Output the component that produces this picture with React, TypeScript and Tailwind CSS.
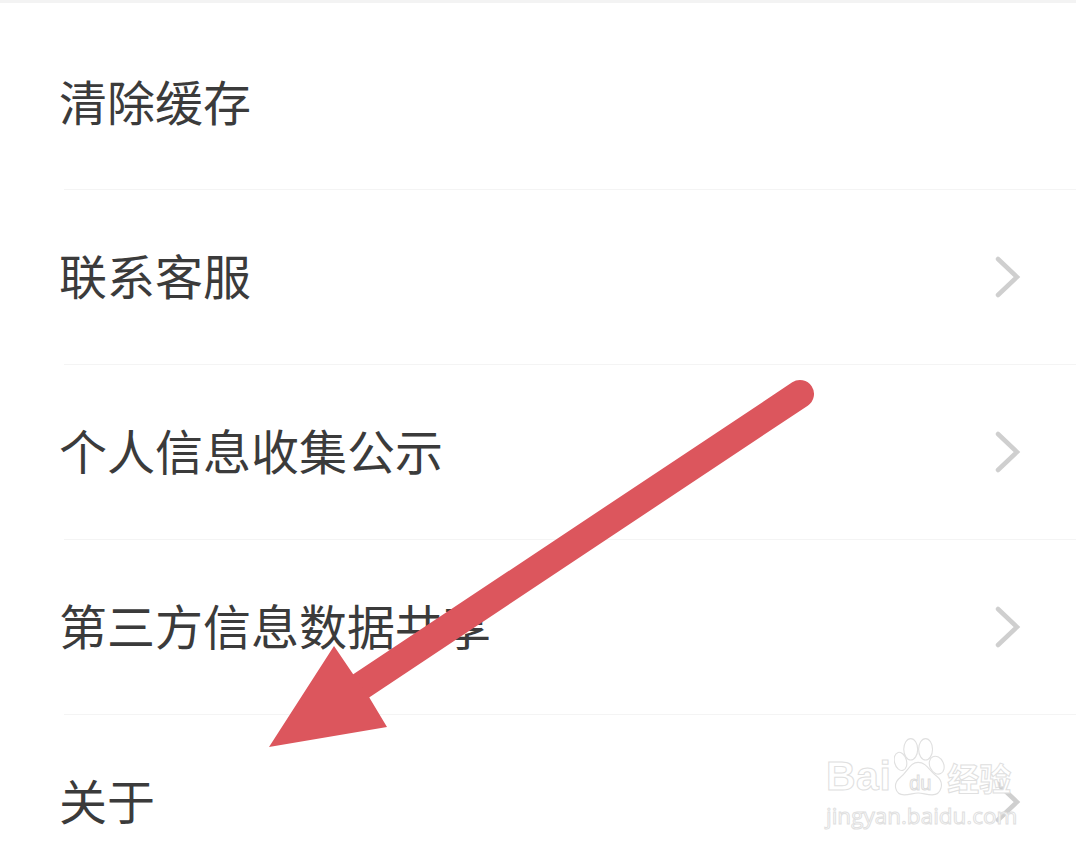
const FONT = "font-['Noto_Sans_CJK_SC',sans-serif]";

function Row({ label, chevron = true, last = false, first = false }: { label: string; chevron?: boolean; last?: boolean; first?: boolean }) {
  return (
    <div className={`relative flex items-center justify-between pl-[59px] pr-[55px] ${first ? "h-[187px] pt-[7px]" : "h-[175px]"}`}>
      <span className={`text-[48px] leading-none text-[#3b3b3b] whitespace-nowrap ${first ? "" : "mb-[8px]"}`}>{label}</span>
      {chevron && (
        <svg width="26" height="42" viewBox="0 0 26 42" fill="none" className="text-[#cfcfcf] mb-[1px]">
          <path d="M3 3 L22 21 L3 39" stroke="currentColor" strokeWidth="4.5" strokeLinecap="round" strokeLinejoin="miter" />
        </svg>
      )}
      {!last && <div className="absolute bottom-0 left-[64px] right-0 h-px bg-[#f4f4f4]" />}
    </div>
  );
}

function Arrow() {
  return (
    <svg className="absolute inset-0 pointer-events-none" width="1076" height="852" viewBox="0 0 1076 852" fill="#dc565d">
      <path d="M800 394 L361 686" stroke="#dc565d" strokeWidth="28" strokeLinecap="round" />
      <polygon points="269,747 334,646 353,674 369,697 387,727" />
    </svg>
  );
}

function Watermark() {
  const outline = "text-white [-webkit-text-stroke:1px_#e0e0e0]";
  return (
    <div className="absolute left-[826px] top-[735px] flex w-[196px] flex-col">
      <div className="flex items-end">
        <span className={`text-[41px] leading-[46px] tracking-[0.5px] font-['Liberation_Sans',sans-serif] font-bold ${outline}`}>Bai</span>
        <div className="relative ml-[3px] flex h-[64px] w-[52px] items-end justify-center">
          <svg className="absolute inset-0" width="52" height="64" viewBox="0 0 56 64" fill="#fff" stroke="#e0e0e0" strokeWidth="1.2">
            <ellipse cx="18" cy="13" rx="7.5" ry="11.5" />
            <ellipse cx="34" cy="13" rx="7.5" ry="11.5" />
            <ellipse cx="7" cy="26" rx="6.5" ry="10" transform="rotate(-15 7 26)" />
            <ellipse cx="46" cy="30" rx="7.5" ry="10" transform="rotate(-25 46 30)" />
            <path d="M26 27 C35 27 38 36 46 42 C55 49 51 62 41 62 C35 62 31 60 26 60 C21 60 17 62 11 62 C1 62 -2 50 7 43 C15 37 17 27 26 27 Z" />
          </svg>
          <span className="relative mb-[4px] text-[20px] leading-[24px] font-['Liberation_Sans',sans-serif] text-white [-webkit-text-stroke:1px_#dcdcdc]">du</span>
        </div>
        <span className={`ml-[1px] mb-[4px] text-[32px] leading-[36px] font-bold ${outline}`}>经验</span>
      </div>
      <span className={`mt-[3px] whitespace-nowrap text-[22.5px] leading-[28px] font-['Open_Sans',sans-serif] ${outline}`}>jingyan.baidu.com</span>
    </div>
  );
}

export default function App() {
  return (
    <div className={`relative w-[1076px] h-[852px] overflow-hidden bg-white ${FONT}`}>
      <div className="h-[3px] bg-[#f3f3f3]" />
      <Row label="清除缓存" chevron={false} first />
      <Row label="联系客服" />
      <Row label="个人信息收集公示" />
      <Row label="第三方信息数据共享" />
      <Row label="关于" last />
      <Arrow />
      <Watermark />
    </div>
  );
}
